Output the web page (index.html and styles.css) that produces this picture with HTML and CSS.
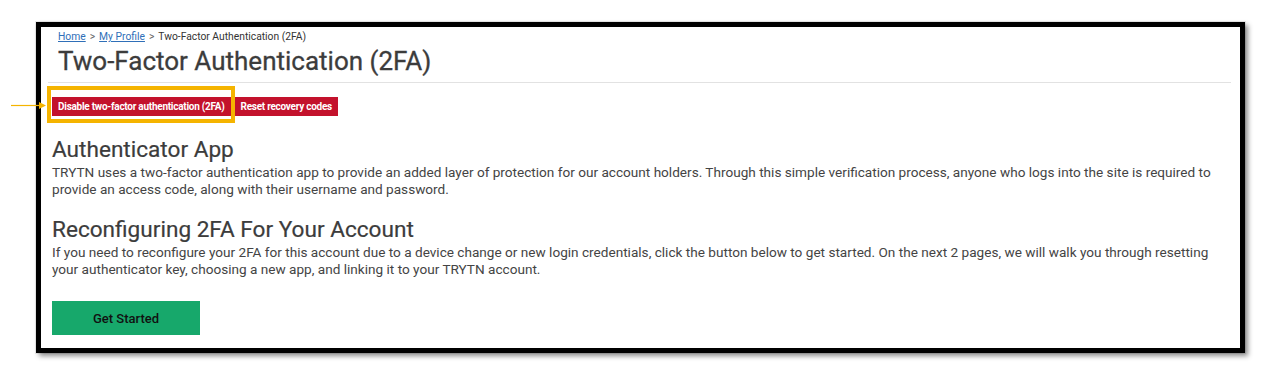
FILE: index.html
```html
<!DOCTYPE html>
<html lang="en">
<head>
<meta charset="utf-8">
<title>Two-Factor Authentication (2FA)</title>
<link rel="stylesheet" href="styles.css">
</head>
<body>
<div class="frame">
  <div class="page-head">
    <nav class="crumbs">
      <a href="#" class="crumb-link">Home</a>
      <span class="sep">&gt;</span>
      <a href="#" class="crumb-link">My Profile</a>
      <span class="sep">&gt;</span>
      <span class="crumb-current">Two-Factor Authentication (2FA)</span>
    </nav>
    <h1 class="title">Two-Factor Authentication (2FA)</h1>
  </div>
  <hr class="rule">
  <div class="actions">
    <div class="highlight-wrap">
      <button class="btn-red">Disable two-factor authentication (2FA)</button>
      <span class="highlight"></span>
      <svg class="pointer" width="36" height="9" viewBox="0 0 36 9"><line x1="0" y1="4.5" x2="30" y2="4.5" stroke="#f5b400" stroke-width="1.2"/><path d="M28 1 L35 4.5 L28 8 Z" fill="#f5b400"/></svg>
    </div>
    <button class="btn-red">Reset recovery codes</button>
  </div>
  <section class="block">
    <h2 class="heading">Authenticator App</h2>
    <p class="text">TRYTN uses a two-factor authentication app to provide an added layer of protection for our account holders. Through this simple verification process, anyone who logs into the site is required to provide an access code, along with their username and password.</p>
  </section>
  <section class="block block-second">
    <h2 class="heading">Reconfiguring 2FA For Your Account</h2>
    <p class="text">If you need to reconfigure your 2FA for this account due to a device change or new login credentials, click the button below to get started. On the next 2 pages, we will walk you through resetting your authenticator key, choosing a new app, and linking it to your TRYTN account.</p>
  </section>
  <button class="btn-green">Get Started</button>
</div>
</body>
</html>
```
FILE: styles.css
```css
* { box-sizing: border-box; }
html, body { margin: 0; padding: 0; background: #fff; }
body {
  font-family: Roboto, "Liberation Sans", Arial, sans-serif;
  color: #444;
  padding: 22px 0 0 36px;
  height: 376px;
  overflow: hidden;
}
.frame {
  width: 1209px;
  height: 331px;
  border: 5px solid #000;
  box-shadow: 3px 3px 5px rgba(0,0,0,0.45), 0 0 0 1px rgba(0,0,0,0.08);
  padding: 4px 9px 0 7px;
  display: flex;
  flex-direction: column;
  align-items: flex-start;
}
.page-head { padding-left: 10px; }
.crumbs {
  font-size: 10.3px;
  line-height: 12px;
  color: #333;
  display: flex;
  gap: 4px;
  align-items: center;
}
.crumb-link { color: #2f6fb8; text-decoration: underline; }
.sep { color: #666; }
.crumb-current { color: #333; }
.title {
  margin: 2px 0 0;
  font-size: 26px;
  line-height: 32px;
  font-weight: 400;
  color: #3c3c3c;
  -webkit-text-stroke: 0.3px #3c3c3c;
}
.rule {
  align-self: stretch;
  margin: 5px 0 0;
  border: 0;
  border-top: 1px solid #e2e2e2;
  height: 0;
}
.actions {
  margin: 14px 0 0 4px;
  display: flex;
  gap: 4px;
}
.highlight-wrap { position: relative; display: flex; }
.btn-red {
  background: #c3122c;
  color: #fff;
  border: 0;
  height: 19px;
  padding: 0 6px;
  font-family: Roboto, "Liberation Sans", Arial, sans-serif;
  font-size: 10px;
  font-weight: 700;
  letter-spacing: -0.26px;
  cursor: pointer;
}
.highlight {
  position: absolute;
  left: -5px;
  right: -4px;
  top: -11px;
  bottom: -7px;
  border: 4px solid #f5b400;
  pointer-events: none;
}
.pointer {
  position: absolute;
  left: -41px;
  top: 4px;
}
.block { margin: 21px 0 0 4px; }
.block-second { margin-top: 20px; }
.heading {
  margin: 0;
  font-size: 22.6px;
  line-height: 26px;
  font-weight: 400;
  color: #3c3c3c;
  -webkit-text-stroke: 0.2px #3c3c3c;
}
.text {
  margin: 1px 0 0;
  font-size: 13.6px;
  line-height: 16.5px;
  color: #444;
}
.btn-green {
  margin: 24px 0 0 4px;
  width: 148px;
  height: 34px;
  background: #17a86b;
  border: 0;
  color: #111;
  font-family: Roboto, "Liberation Sans", Arial, sans-serif;
  font-size: 13px;
  font-weight: 500;
  cursor: pointer;
}
```
